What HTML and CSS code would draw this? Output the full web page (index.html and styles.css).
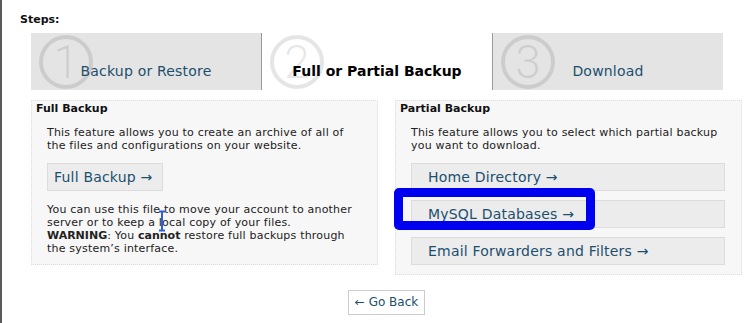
FILE: index.html
```html
<!DOCTYPE html>
<html>
<head>
<meta charset="utf-8">
<link rel="stylesheet" href="styles.css">
</head>
<body>
<div class="page">
  <div class="steps-label">Steps:</div>
  <div class="wrap">
    <div class="tabs">
      <div class="tab"><span class="num">1</span><span class="tab-text">Backup or Restore</span></div>
      <div class="tab active"><span class="num">2</span><span class="tab-text">Full or Partial Backup</span></div>
      <div class="tab"><span class="num">3</span><span class="tab-text">Download</span></div>
    </div>
    <div class="panels">
      <div class="panel">
        <div class="panel-title">Full Backup</div>
        <div class="panel-body">
          <p>This feature allows you to create an archive of all of the files and configurations on your website.</p>
          <div class="btn-row"><a class="btn">Full Backup →</a></div>
          <p class="last">You can use this file to move your account to another server or to keep a local copy of your files.<br><b>WARNING</b>: You <b>cannot</b> restore full backups through the system’s interface.</p>
          <svg class="cursor" width="8" height="22" viewBox="0 0 8 22"><path d="M1 1.5h6M4 1.5v19M1 20.5h6" stroke="#2f5fd0" stroke-width="2" fill="none"/></svg>
        </div>
      </div>
      <div class="panel">
        <div class="panel-title">Partial Backup</div>
        <div class="panel-body">
          <p>This feature allows you to select which partial backup you want to download.</p>
          <div class="list">
            <a class="btn wide">Home Directory →</a>
            <a class="btn wide">MySQL Databases →</a>
            <a class="btn wide">Email Forwarders and Filters →</a>
          </div>
          <div class="highlight"></div>
        </div>
      </div>
    </div>
    <div class="back-row"><a class="back">← Go Back</a></div>
  </div>
</div>
</body>
</html>
```
FILE: styles.css
```css
html, body {
  margin: 0;
  padding: 0;
}
body {
  font-family: "DejaVu Sans", Verdana, sans-serif;
  font-size: 11px;
  color: #222;
  background: #fff;
  border-left: 2px solid #5a5a5a;
  min-height: 323px;
  box-sizing: border-box;
}
.page {
  padding: 13px 0 0 18px;
}
.steps-label {
  font-weight: bold;
  font-size: 11px;
  line-height: 13px;
  color: #111;
}
.wrap {
  margin-left: 11px;
  width: 711px;
}
.tabs {
  display: flex;
  width: 692px;
  height: 57px;
  margin-top: 7px;
}
.tab {
  flex: 1;
  background: #e4e4e4;
  position: relative;
  display: flex;
  align-items: flex-end;
  justify-content: center;
  padding-bottom: 10px;
  box-sizing: border-box;
  overflow: hidden;
}
.tab.active {
  background: #fff;
  border-left: 1px solid #9a9a9a;
  border-right: 1px solid #9a9a9a;
}
.num {
  position: absolute;
  left: 8px;
  top: 2px;
  width: 46px;
  height: 46px;
  border: 4px solid rgba(0, 0, 0, 0.1);
  border-radius: 50%;
  color: rgba(0, 0, 0, 0.1);
  font-family: Roboto, "DejaVu Sans", sans-serif;
  font-weight: 300;
  font-size: 46px;
  line-height: 46px;
  text-align: center;
}
.tab-text {
  position: relative;
  font-size: 14px;
  line-height: 17px;
  color: #1c4f6e;
  letter-spacing: 0.2px;
}
.tab.active .tab-text {
  color: #000;
  font-weight: bold;
  letter-spacing: 0;
}
.panels {
  display: grid;
  grid-template-columns: 347px 347px;
  column-gap: 17px;
  align-items: start;
  margin-top: 10px;
}
.panel {
  background: #f7f7f7;
  border: 1px dotted #dcdcdc;
  box-sizing: border-box;
}
.panel-title {
  font-weight: bold;
  color: #111;
  line-height: 13px;
  padding: 1px 4px 0;
}
.panel-body {
  padding: 11px 16px 9px 15px;
  position: relative;
}
.panel-body p {
  margin: 0;
  line-height: 13px;
  letter-spacing: 0.2px;
}
.panel-body p b {
  letter-spacing: 0;
}
.btn-row {
  display: flex;
  margin: 11px 0 12px;
}
.btn {
  display: block;
  background: #ececec;
  border: 1px solid #dcdcdc;
  color: #1c4f6e;
  font-size: 14px;
  line-height: 26px;
  padding: 0 9px 0 6px;
  letter-spacing: 0.2px;
}
.list {
  display: flex;
  flex-direction: column;
  gap: 9px;
  margin-top: 11px;
}
.btn.wide {
  padding-left: 16px;
}
.cursor {
  position: absolute;
  left: 126px;
  top: 95px;
}
.highlight {
  position: absolute;
  left: -2px;
  top: 73px;
  width: 183px;
  height: 24px;
  border: 9px solid #0000f0;
  border-radius: 5px;
}
.back-row {
  display: flex;
  justify-content: center;
  margin-top: 15px;
}
.back {
  display: block;
  border: 1px solid #cccccc;
  color: #1c4f6e;
  font-size: 12px;
  line-height: 23px;
  padding: 0 6px;
}
```
